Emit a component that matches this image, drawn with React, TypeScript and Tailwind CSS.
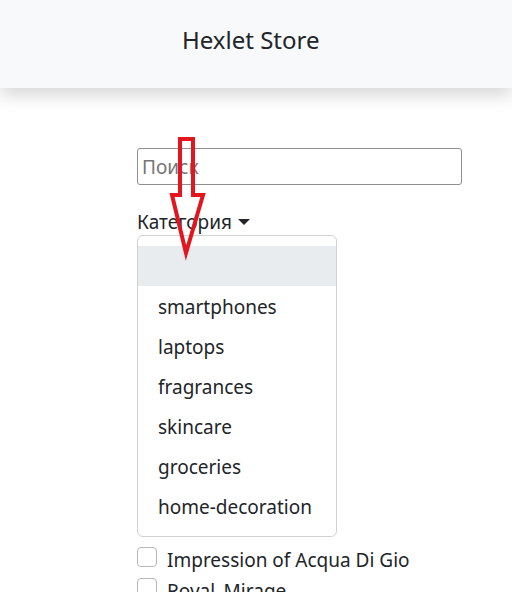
const categories = ['', 'smartphones', 'laptops', 'fragrances', 'skincare', 'groceries', 'home-decoration'];

const brands = ['Impression of Acqua Di Gio', 'Royal_Mirage'];

function Arrow() {
  return (
    <svg className="absolute left-0 top-0 z-20 pointer-events-none" width="512" height="592">
      <polygon
        points="180,139 193,139 193,195 203,195 186,253 172,195 180,195"
        fill="none"
        stroke="#e3161f"
        strokeWidth="4"
        strokeLinejoin="miter"
      />
    </svg>
  );
}

export default function App() {
  return (
    <div
      className="relative w-[512px] h-[592px] overflow-hidden bg-white text-[19px] text-[#212529]"
      style={{ fontFamily: '"Noto Sans", "Open Sans", sans-serif' }}
    >
      {/* Navbar */}
      <header className="h-[88px] bg-[#f8f9fa] shadow-[0_8px_16px_rgba(0,0,0,0.15)] flex items-center pl-[182px] pb-[8px]">
        <span className="text-[24px]">Hexlet Store</span>
      </header>

      <main className="pl-[137px] pt-[60px] w-[462px]">
        <input
          type="text"
          placeholder="Поиск"
          className="w-full h-[37px] px-[4px] border border-[#8f8f8f] rounded-[3px] text-[19px] placeholder:text-[#757575] outline-none"
        />

        {/* Category dropdown */}
        <div className="relative mt-[22px]">
          <button className="flex items-center gap-[6px] h-[28px] pt-[2px] leading-none">
            Категория
            <span className="w-0 h-0 border-x-[6px] border-x-transparent border-t-[6px] border-t-[#212529]" />
          </button>
          <ul className="absolute left-0 top-[28px] z-10 w-[200px] py-[10px] bg-white border border-[#d0d2d4] rounded-[6px]">
            {categories.map((c, i) => (
              <li
                key={i}
                className={`h-[40px] flex items-center px-[20px] pt-[3px] whitespace-nowrap ${i === 0 ? 'bg-[#e9ecef]' : ''}`}
              >
                {c}
              </li>
            ))}
          </ul>
        </div>

        {/* Brands */}
        <div className="mt-[306px] flex flex-col">
          {brands.map((b) => (
            <label key={b} className="h-[31px] flex items-center gap-[10px]">
              <span className="w-[20px] h-[20px] border border-[#b4b8bc] rounded-[4px] bg-white shrink-0" />
              <span className="whitespace-nowrap pt-[8px]">{b}</span>
            </label>
          ))}
        </div>
      </main>

      <Arrow />
    </div>
  );
}
